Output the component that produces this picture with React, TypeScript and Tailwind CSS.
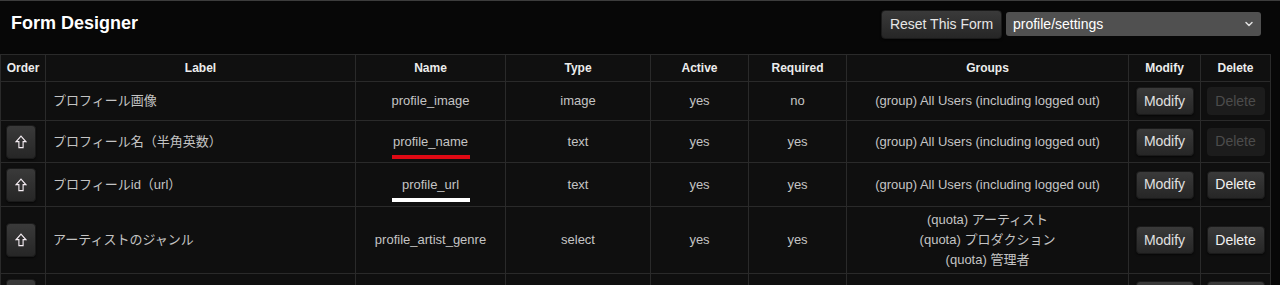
import React from "react";
import { ChevronDown } from "lucide-react";

type Row = {
  label: string;
  name: string;
  type: string;
  active: string;
  required: string;
  groups: string[];
  canMove: boolean;
  canDelete: boolean;
  mark?: "red" | "white";
  height: string;
  cut?: boolean;
};

const rows: Row[] = [
  { label: "プロフィール画像", name: "profile_image", type: "image", active: "yes", required: "no", groups: ["(group) All Users (including logged out)"], canMove: false, canDelete: false, height: "h-[39px]" },
  { label: "プロフィール名（半角英数）", name: "profile_name", type: "text", active: "yes", required: "yes", groups: ["(group) All Users (including logged out)"], canMove: true, canDelete: false, mark: "red", height: "h-[42px]" },
  { label: "プロフィールid（url）", name: "profile_url", type: "text", active: "yes", required: "yes", groups: ["(group) All Users (including logged out)"], canMove: true, canDelete: true, mark: "white", height: "h-[44px]" },
  { label: "アーティストのジャンル", name: "profile_artist_genre", type: "select", active: "yes", required: "yes", groups: ["(quota) アーティスト", "(quota) プロダクション", "(quota) 管理者"], canMove: true, canDelete: true, height: "h-[67px]" },
  // 화면 아래로 잘린 다음 행 (버튼 윗부분만 보임)
  { label: "", name: "", type: "", active: "", required: "", groups: [""], canMove: true, canDelete: true, height: "h-[44px]", cut: true },
];

const cols = ["w-[45px]", "w-[310px]", "w-[150px]", "w-[145px]", "w-[98px]", "w-[98px]", "w-[282px]", "w-[72px]", "w-[70px]"];
const heads = ["Order", "Label", "Name", "Type", "Active", "Required", "Groups", "Modify", "Delete"];

// 위쪽 화살표 아이콘 (외곽선)
const UpArrow = () => (
  <svg width="12" height="14" viewBox="0 0 12 14">
    <path d="M6 1.2 L10.8 6.6 L8.1 6.6 L8.1 12.6 L3.9 12.6 L3.9 6.6 L1.2 6.6 Z" fill="none" stroke="#f6eef4" strokeWidth="1.1" strokeLinejoin="miter" />
  </svg>
);

const btn = "rounded-[4px] border border-[#1a1a1a] bg-gradient-to-b from-[#3a3a3a] to-[#262626] shadow-[0_1px_2px_rgba(0,0,0,0.6)]";

export default function App() {
  return (
    <div className="w-[1280px] h-[285px] overflow-hidden bg-[#070707] border-t border-[#3c3c3c] font-['Liberation_Sans','Noto_Sans_CJK_JP',sans-serif] text-[#c4c4c4]">
      {/* 상단 헤더 */}
      <div className="flex items-center justify-between h-[53px] pl-[11px] pr-[19px]">
        <h1 className="text-[18px] font-bold text-white mt-[-8px]">Form Designer</h1>
        <div className="flex items-center gap-[4px] mt-[-7px]">
          <button className={`${btn} w-[121px] h-[29px] text-[14px] text-[#e6e6e6]`}>Reset This Form</button>
          <div className="flex items-center justify-between w-[255px] h-[24px] rounded-[3px] bg-[#505050] pl-[7px] pr-[6px] text-[14px] text-white">
            <span>profile/settings</span>
            <ChevronDown size={12} strokeWidth={3} color="#e0e0e0" />
          </div>
        </div>
      </div>

      {/* 폼 필드 테이블 */}
      <table className="table-fixed border-collapse w-[1270px] text-[13px]">
        <colgroup>
          {cols.map((c, i) => (
            <col key={i} className={c} />
          ))}
        </colgroup>
        <thead>
          <tr className="h-[27px] bg-[#101010]">
            {heads.map((h) => (
              <th key={h} className="border border-[#2a2a2a] text-[12px] font-bold text-[#ececec] text-center">
                {h}
              </th>
            ))}
          </tr>
        </thead>
        <tbody>
          {rows.map((r, i) => (
            <tr key={i} className={`${r.height} bg-[#0f0f0f]`}>
              <td className={`border border-[#2a2a2a] ${r.cut ? "align-top pt-[5px]" : "align-middle"}`}>
                {r.canMove && (
                  <div className={`${btn} w-[30px] h-[34px] ml-[5px] flex items-center justify-center`}>
                    <UpArrow />
                  </div>
                )}
              </td>
              <td className="border border-[#2a2a2a] pl-[7px] text-left">{r.label}</td>
              <td className="border border-[#2a2a2a] text-center">
                <span className="relative inline-block">
                  {r.name}
                  {r.mark && (
                    <span
                      className={`absolute left-1/2 -translate-x-1/2 top-[calc(100%+4px)] w-[78px] h-[4px] ${
                        r.mark === "red" ? "bg-[#e00914]" : "bg-white"
                      }`}
                    />
                  )}
                </span>
              </td>
              <td className="border border-[#2a2a2a] text-center">{r.type}</td>
              <td className="border border-[#2a2a2a] text-center">{r.active}</td>
              <td className="border border-[#2a2a2a] text-center">{r.required}</td>
              <td className="border border-[#2a2a2a] text-center leading-[20px]">
                {r.groups.map((g, j) => (
                  <div key={j}>{g}</div>
                ))}
              </td>
              <td className={`border border-[#2a2a2a] text-center ${r.cut ? "align-top pt-[7px]" : ""}`}>
                <button className={`${btn} w-[58px] h-[28px] text-[14px] text-[#e0e0e0]`}>{r.cut ? "" : "Modify"}</button>
              </td>
              <td className={`border border-[#2a2a2a] text-center ${r.cut ? "align-top pt-[7px]" : ""}`}>
                {r.canDelete ? (
                  <button className={`${btn} w-[58px] h-[28px] text-[14px] text-[#f0f0f0]`}>{r.cut ? "" : "Delete"}</button>
                ) : (
                  <button disabled className="w-[58px] h-[28px] rounded-[4px] bg-[#1c1c1c] text-[14px] text-[#4c4c4c]">
                    Delete
                  </button>
                )}
              </td>
            </tr>
          ))}
        </tbody>
      </table>
    </div>
  );
}
